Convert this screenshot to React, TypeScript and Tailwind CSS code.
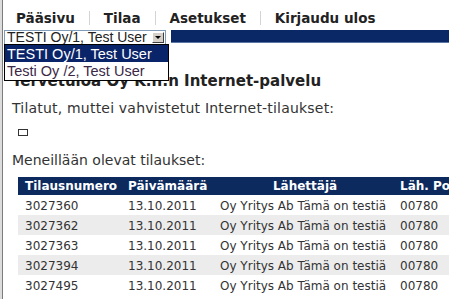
import React from 'react';

const rows = [
  { id: '3027360', date: '13.10.2011', sender: 'Oy Yritys Ab Tämä on testiä', zip: '00780' },
  { id: '3027362', date: '13.10.2011', sender: 'Oy Yritys Ab Tämä on testiä', zip: '00780' },
  { id: '3027363', date: '13.10.2011', sender: 'Oy Yritys Ab Tämä on testiä', zip: '00780' },
  { id: '3027394', date: '13.10.2011', sender: 'Oy Yritys Ab Tämä on testiä', zip: '00780' },
  { id: '3027495', date: '13.10.2011', sender: 'Oy Yritys Ab Tämä on testiä', zip: '00780' },
];

const navItems = ['Pääsivu', 'Tilaa', 'Asetukset', 'Kirjaudu ulos'];

const App: React.FC = () => {
  return (
    <div className="w-[449px] h-[299px] overflow-hidden bg-white flex font-['DejaVu_Sans',sans-serif] text-[#333]">
      {/* reunaviiva vasemmalla */}
      <div className="w-[2px] bg-[#dcdcdc] shrink-0" />
      <div className="w-px bg-[#7c7c7c] shrink-0" />

      <div className="relative flex-1 min-w-0">
        {/* Päävalikko */}
        <nav className="h-[30px] pt-[10px] pl-[13px] flex items-start text-[13.5px] leading-[16px] font-bold text-[#222] whitespace-nowrap">
          {navItems.map((item, i) => (
            <React.Fragment key={item}>
              {i > 0 && <span className="w-px h-[14px] mt-[1px] bg-[#d4d4d4] mx-[14px]" />}
              <span>{item}</span>
            </React.Fragment>
          ))}
        </nav>

        {/* Yrityksen valinta + sininen palkki */}
        <div className="h-[14px] flex items-start">
          <div className="ml-px w-[162px] h-[15px] border border-[#7f9db9] bg-white flex items-center shrink-0">
            <span className="flex-1 pl-[2px] font-['Liberation_Sans',sans-serif] text-[14px] leading-[13px] text-[#222] overflow-hidden whitespace-nowrap">
              TESTI Oy/1, Test User
            </span>
            <div className="w-[12px] h-[11px] mr-px bg-[#d4d0c8] border-t border-l border-t-white border-l-white border-r border-b border-r-[#404040] border-b-[#404040] flex items-center justify-center">
              <div className="w-0 h-0 border-l-[3px] border-r-[3px] border-t-[3px] border-l-transparent border-r-transparent border-t-black" />
            </div>
          </div>
          <div className="ml-[5px] flex-1 h-[13px] bg-[#0b2866] border-b border-[#5d75a5]" />
        </div>

        {/* Avattu pudotusvalikko */}
        <div className="absolute top-[44px] left-px w-[165px] border border-black bg-white font-['Liberation_Sans',sans-serif] text-[14.5px] leading-[18px] z-10">
          <div className="h-[17px] bg-[#0a246a] text-white pl-[2px] whitespace-nowrap">TESTI Oy/1, Test User</div>
          <div className="h-[18px] text-[#3a2846] pl-[2px] whitespace-nowrap">Testi Oy /2, Test User</div>
        </div>

        <div className="pl-[9px]">
          <h1 className="mt-[28px] text-[15px] leading-[18px] font-bold text-[#222] whitespace-nowrap">
            Tervetuloa Oy K.h:n Internet-palvelu
          </h1>
          <p className="mt-[10px] text-[14px] leading-[16px] tracking-[0.2px] whitespace-nowrap">
            Tilatut, muttei vahvistetut Internet-tilaukset:
          </p>
          <div className="mt-[13px] ml-[6px] w-[10px] h-[7px] border-[1.5px] border-[#333]" />
          <p className="mt-[16px] text-[14px] leading-[16px] whitespace-nowrap">Meneillään olevat tilaukset:</p>
        </div>

        {/* Tilaustaulukko */}
        <div className="mt-[9px] ml-[15px] w-[460px] text-[12px] leading-[20px] whitespace-nowrap">
          <div className="grid grid-cols-[105px_92px_180px_83px] h-[18px] leading-[18px] bg-[#0d2a5f] text-white font-bold">
            <div className="pl-[7px]">Tilausnumero</div>
            <div className="pl-[5px]">Päivämäärä</div>
            <div className="text-center">Lähettäjä</div>
            <div className="pl-[5px]">Läh. Postinro</div>
          </div>
          {rows.map((r, i) => (
            <div
              key={r.id}
              className={`grid grid-cols-[105px_92px_180px_83px] h-[20px] pt-px ${i % 2 === 1 ? 'bg-[#ececec]' : 'bg-white'}`}
            >
              <div className="pl-[7px]">{r.id}</div>
              <div className="pl-[5px]">{r.date}</div>
              <div className="pl-[5px] overflow-hidden">{r.sender}</div>
              <div className="pl-[5px]">{r.zip}</div>
            </div>
          ))}
        </div>
      </div>
    </div>
  );
};

export default App;
